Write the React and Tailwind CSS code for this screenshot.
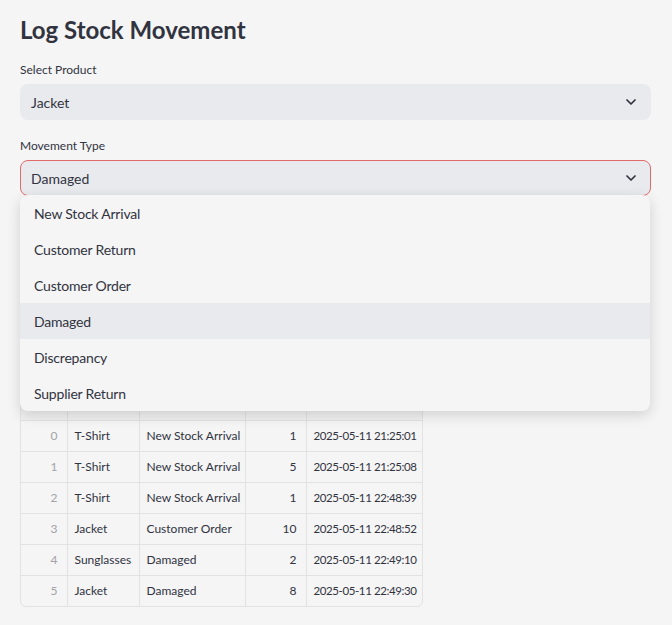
import { ChevronDown } from "lucide-react";

const options = [
  "New Stock Arrival",
  "Customer Return",
  "Customer Order",
  "Damaged",
  "Discrepancy",
  "Supplier Return",
];

const rows = [
  [0, "T-Shirt", "New Stock Arrival", 1, "2025-05-11 21:25:01"],
  [1, "T-Shirt", "New Stock Arrival", 5, "2025-05-11 21:25:08"],
  [2, "T-Shirt", "New Stock Arrival", 1, "2025-05-11 22:48:39"],
  [3, "Jacket", "Customer Order", 10, "2025-05-11 22:48:52"],
  [4, "Sunglasses", "Damaged", 2, "2025-05-11 22:49:10"],
  [5, "Jacket", "Damaged", 8, "2025-05-11 22:49:30"],
];

function SelectBox({ value, focused }) {
  return (
    <div
      className={`flex h-[36px] items-center justify-between rounded-lg bg-[#e9eaee] text-[14px] ${
        focused ? "border border-[#e26a6a] pl-[10px] pr-[11px]" : "pl-[11px] pr-[12px]"
      }`}
    >
      <span>{value}</span>
      <ChevronDown size={16} strokeWidth={2.6} className="text-[#31333f]" />
    </div>
  );
}

export default function App() {
  return (
    <div
      className="min-h-[625px] bg-[#f5f5f5] px-[20px] pt-[12px] text-[#31333f]"
      style={{ fontFamily: "Lato, 'Open Sans', sans-serif" }}
    >
      <h1 className="text-[24px] font-bold leading-[36px]">Log Stock Movement</h1>

      <div className="mt-[12px] w-[631px]">
        <div className="text-[12px] leading-[20px]">Select Product</div>
        <div className="mt-[4px]">
          <SelectBox value="Jacket" />
        </div>

        <div className="mt-[16px] text-[12px] leading-[20px]">Movement Type</div>
        <div className="relative mt-[4px]">
          <SelectBox value="Damaged" focused />
          <ul className="absolute left-0 right-[1px] top-[35px] z-10 overflow-hidden rounded-lg bg-[#f5f5f5] shadow-[0_4px_14px_rgba(0,0,0,0.15)]">
            {options.map((o) => (
              <li
                key={o}
                className={`flex h-[36px] items-center pl-[14px] text-[14px] tracking-[-0.2px] ${
                  o === "Damaged" ? "bg-[#e9eaee]" : ""
                }`}
              >
                {o}
              </li>
            ))}
          </ul>
        </div>
      </div>

      {/* header row sits under the open dropdown, so its labels are never seen */}
      <div className="mt-[192px] w-[403px] overflow-hidden rounded-md border border-[#e2e2e2] text-[12px] whitespace-nowrap">
        <table className="w-full table-fixed border-collapse">
          <colgroup>
            <col className="w-[46px]" />
            <col className="w-[72px]" />
            <col className="w-[106px]" />
            <col className="w-[61px]" />
            <col className="w-[118px]" />
          </colgroup>
          <thead>
            <tr className="h-[31px] bg-[#f0f0f0]">
              <th className="border-b border-[#e2e2e2]"></th>
              <th className="border-b border-l border-[#e2e2e2]"></th>
              <th className="border-b border-l border-[#e2e2e2]"></th>
              <th className="border-b border-l border-[#e2e2e2]"></th>
              <th className="border-b border-l border-[#e2e2e2]"></th>
            </tr>
          </thead>
          <tbody>
            {rows.map((r, i) => {
              const b = i < rows.length - 1 ? "border-b" : "";
              return (
                <tr key={r[0]} className="h-[31px]">
                  <td className={`border-[#e2e2e2] pr-[9px] text-right text-[#a3a3a8] ${b}`}>{r[0]}</td>
                  <td className={`border-l border-[#e2e2e2] px-[7px] ${b}`}>{r[1]}</td>
                  <td className={`border-l border-[#e2e2e2] px-[7px] ${b}`}>{r[2]}</td>
                  <td className={`border-l border-[#e2e2e2] px-[9px] text-right ${b}`}>{r[3]}</td>
                  <td className={`border-l border-[#e2e2e2] pl-[7px] pr-0 text-[11.5px] tracking-[-0.4px] ${b}`}>{r[4]}</td>
                </tr>
              );
            })}
          </tbody>
        </table>
      </div>
    </div>
  );
}
